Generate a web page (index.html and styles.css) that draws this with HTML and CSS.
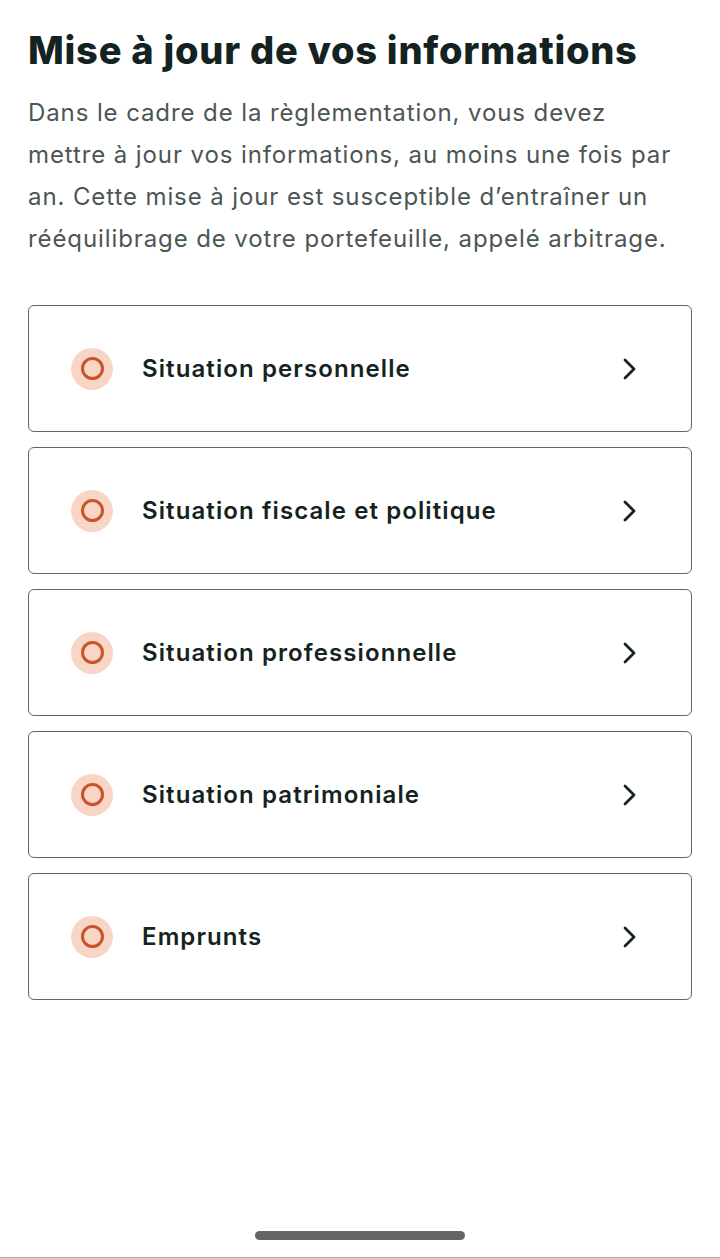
FILE: index.html
```html
<!DOCTYPE html>
<html lang="fr">
<head>
<meta charset="utf-8">
<link rel="stylesheet" href="styles.css">
</head>
<body>
<div class="page">
  <h1 class="title">Mise à jour de vos informations</h1>
  <p class="intro">Dans le cadre de la règlementation, vous devez mettre à jour vos informations, au moins une fois par an. Cette mise à jour est susceptible d’entraîner un rééquilibrage de votre portefeuille, appelé arbitrage.</p>
  <div class="list">
    <div class="card"><span class="status"><span class="ring"></span></span><span class="label">Situation personnelle</span><svg class="chev" viewBox="0 0 16 24" width="16" height="24"><path d="M4 3l9 9-9 9" fill="none" stroke="#142322" stroke-width="2.8" stroke-linecap="round" stroke-linejoin="round"/></svg></div>
    <div class="card"><span class="status"><span class="ring"></span></span><span class="label">Situation fiscale et politique</span><svg class="chev" viewBox="0 0 16 24" width="16" height="24"><path d="M4 3l9 9-9 9" fill="none" stroke="#142322" stroke-width="2.8" stroke-linecap="round" stroke-linejoin="round"/></svg></div>
    <div class="card"><span class="status"><span class="ring"></span></span><span class="label">Situation professionnelle</span><svg class="chev" viewBox="0 0 16 24" width="16" height="24"><path d="M4 3l9 9-9 9" fill="none" stroke="#142322" stroke-width="2.8" stroke-linecap="round" stroke-linejoin="round"/></svg></div>
    <div class="card"><span class="status"><span class="ring"></span></span><span class="label">Situation patrimoniale</span><svg class="chev" viewBox="0 0 16 24" width="16" height="24"><path d="M4 3l9 9-9 9" fill="none" stroke="#142322" stroke-width="2.8" stroke-linecap="round" stroke-linejoin="round"/></svg></div>
    <div class="card"><span class="status"><span class="ring"></span></span><span class="label">Emprunts</span><svg class="chev" viewBox="0 0 16 24" width="16" height="24"><path d="M4 3l9 9-9 9" fill="none" stroke="#142322" stroke-width="2.8" stroke-linecap="round" stroke-linejoin="round"/></svg></div>
  </div>
</div>
<div class="home"><span class="bar"></span></div>
</body>
</html>
```
FILE: styles.css
```css
html, body { margin: 0; padding: 0; background: #fff; }
body { width: 720px; height: 1258px; position: relative; overflow: hidden; font-family: Inter, "Noto Sans", sans-serif; border-bottom: 1px solid #aaa; box-sizing: border-box; }
.page { padding: 28px 28px 0 28px; }
.title { margin: 0; font-size: 38px; font-weight: 800; color: #142322; letter-spacing: 0.75px; line-height: 44px; white-space: nowrap; }
.intro { margin: 20px 0 0 0; font-size: 24px; line-height: 42px; color: #4b5655; font-weight: 400; letter-spacing: 0.9px; width: 650px; }
.list { margin-top: 45px; display: flex; flex-direction: column; gap: 15px; }
.card { height: 127px; box-sizing: border-box; border: 1px solid #5f6867; border-radius: 6px; display: flex; align-items: center; padding: 0 54px 0 42px; }
.status { width: 42px; height: 42px; border-radius: 50%; background: #f8d5c4; display: flex; align-items: center; justify-content: center; flex: none; }
.ring { width: 17px; height: 17px; border: 3px solid #c8552a; border-radius: 50%; }
.label { flex: 1; margin-left: 29px; font-size: 24px; font-weight: 600; color: #142322; letter-spacing: 1.1px; }
.chev { flex: none; }
.home { position: absolute; left: 0; right: 0; bottom: 17px; display: flex; justify-content: center; }
.bar { width: 210px; height: 9px; border-radius: 5px; background: #666; }
```
